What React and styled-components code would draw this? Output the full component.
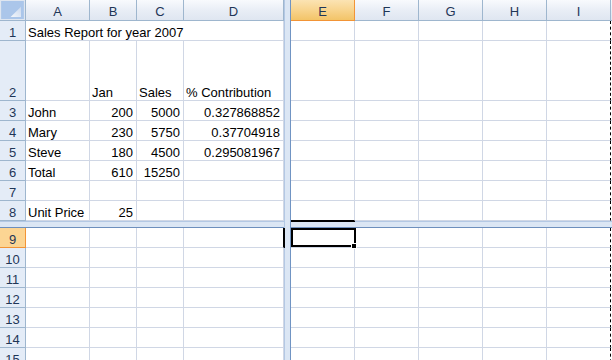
import styled, { createGlobalStyle } from 'styled-components';

const GlobalStyle = createGlobalStyle`
    html, body {
        margin: 0;
        padding: 0;
        background: #ffffff;
        overflow: hidden;
    }
`;

const Sheet = styled.div`
    display: grid;
    grid-template-columns: 26px 64px 47px 47px 100px 7px repeat(5, 64px) 1fr;
    grid-template-rows: 21px 20px 60px repeat(6, 20px) 7px repeat(7, 20px);
    width: 612px;
    height: 360px;
    overflow: hidden;
    font-family: "Liberation Sans", Arial, sans-serif;
    font-size: 13px;
    color: #000000;
    background: #ffffff;
`;

const Corner = styled.div`
    background: #dfe6f0;
    border-right: 1px solid #9eb6ce;
    border-bottom: 1px solid #9eb6ce;
    padding: 1px;
    display: flex;
    & > svg {
        width: 100%;
        height: 100%;
    }
`;

const ColHead = styled.div`
    display: flex;
    align-items: center;
    justify-content: center;
    padding-top: 3px;
    background: ${p => p.$active
        ? 'linear-gradient(#fbe3b3, #f8d48e 50%, #f3c468)'
        : 'linear-gradient(#f8fafd, #e9eef6 50%, #dfe6f1)'};
    border-right: 1px solid ${p => p.$active ? '#f29436' : '#9eb6ce'};
    border-bottom: 1px solid ${p => p.$active ? '#f29436' : '#9eb6ce'};
    color: #1f3657;
    line-height: 1;
`;

const RowHead = styled.div`
    display: flex;
    align-items: flex-end;
    justify-content: center;
    background: ${p => p.$active ? '#fcd593' : '#e4ecf7'};
    border-right: 1px solid ${p => p.$active ? '#f29436' : '#9eb6ce'};
    border-bottom: 1px solid ${p => p.$active ? '#f29436' : '#9eb6ce'};
    color: #1f3657;
    line-height: 14px;
`;

const Cell = styled.div`
    position: relative;
    grid-column: span ${p => p.$span || 1};
    display: flex;
    align-items: flex-end;
    justify-content: ${p => p.$num ? 'flex-end' : 'flex-start'};
    padding: 0 3px 0 2px;
    border-right: 1px ${p => p.$pageBreak
        ? 'dashed #000000'
        : p.$markRight ? 'solid #000000' : 'solid #d0d7e5'};
    border-bottom: 1px solid ${p => p.$markBottom ? '#000000' : '#d0d7e5'};
    white-space: nowrap;
    overflow: ${p => p.$selected ? 'visible' : 'hidden'};
    line-height: 14px;
    box-shadow: ${p => p.$markBottom
        ? '0 1px 0 #000000'
        : p.$markRight ? '1px 0 0 #000000' : 'none'};
    z-index: ${p => (p.$selected || p.$markBottom || p.$markRight) ? 3 : 'auto'};
    &::after {
        content: '';
        display: ${p => p.$selected ? 'block' : 'none'};
        position: absolute;
        top: 0;
        left: 0;
        right: -2px;
        bottom: 0;
        border: 2px solid #000000;
    }
    &::before {
        content: '';
        display: ${p => p.$selected ? 'block' : 'none'};
        position: absolute;
        right: -3px;
        bottom: -2px;
        width: 6px;
        height: 6px;
        box-sizing: border-box;
        background: #000000;
        border: 1px solid #ffffff;
        z-index: 1;
    }
`;

const VSplit = styled.div`
    grid-column: 6;
    grid-row: 1 / -1;
    background: #dbe6f4;
    border-left: 1px solid #b3c8e4;
    border-right: 1px solid #7094c3;
    z-index: 2;
`;

const HSplit = styled.div`
    grid-column: 1 / -1;
    grid-row: 10;
    background: #dbe6f4;
    border-top: 1px solid #b3c8e4;
    border-bottom: 1px solid #6d8fbd;
    z-index: 1;
`;

const leftCols = ['A', 'B', 'C', 'D'];
const rightCols = ['E', 'F', 'G', 'H', 'I'];

const data = {
    1: [{ v: 'Sales Report for year 2007', span: 4 }],
    2: ['', 'Jan', 'Sales', '% Contribution'],
    3: ['John', 200, 5000, 0.327868852],
    4: ['Mary', 230, 5750, 0.37704918],
    5: ['Steve', 180, 4500, 0.295081967],
    6: ['Total', 610, 15250, ''],
    7: ['', '', '', ''],
    8: ['Unit Price', 25, '', ''],
};

const rowNumbers = [1, 2, 3, 4, 5, 6, 7, 8, 9, 10, 11, 12, 13, 14, 15];
const activeRow = 9;

const LeftCells = ({ row }) => {
    const values = data[row] || ['', '', '', ''];
    return values.map((item, i) => {
        const v = item && typeof item === 'object' ? item.v : item;
        const span = item && typeof item === 'object' ? item.span : 1;
        return (
            <Cell
                key={`l${i}`}
                $span={span}
                $num={typeof v === 'number'}
                $markRight={row === activeRow && i === 3}
            >
                {v === '' ? null : String(v)}
            </Cell>
        );
    });
};

const RightCells = ({ row }) => (
    <>
        {rightCols.map((c) => (
            <Cell
                key={c}
                $pageBreak={c === 'I'}
                $selected={c === 'E' && row === activeRow}
                $markBottom={c === 'E' && row === activeRow - 1}
            />
        ))}
        <Cell key="J" />
    </>
);

const Row = ({ n }) => (
    <>
        <RowHead $active={n === activeRow}>{n}</RowHead>
        <LeftCells row={n} />
        <RightCells row={n} />
    </>
);

const App = () => {
    return (
        <>
            <GlobalStyle />
            <Sheet>
                <VSplit />
                <HSplit />

                <Corner>
                    <svg viewBox="0 0 24 19">
                        <defs>
                            <linearGradient id="tri" x1="0" y1="1" x2="1" y2="0">
                                <stop offset="0" stopColor="#f4f7fb" />
                                <stop offset="1" stopColor="#c9d8ee" />
                            </linearGradient>
                        </defs>
                        <rect x="0" y="0" width="24" height="19" fill="#abc6ea" />
                        <polygon points="10,17 21,17 21,6" fill="url(#tri)" />
                    </svg>
                </Corner>
                {leftCols.map((c) => <ColHead key={c}>{c}</ColHead>)}
                {rightCols.map((c) => <ColHead key={c} $active={c === 'E'}>{c}</ColHead>)}
                <ColHead />

                {rowNumbers.map((n) => (
                    <Row key={n} n={n} />
                ))}
            </Sheet>
        </>
    );
};

export default App;
